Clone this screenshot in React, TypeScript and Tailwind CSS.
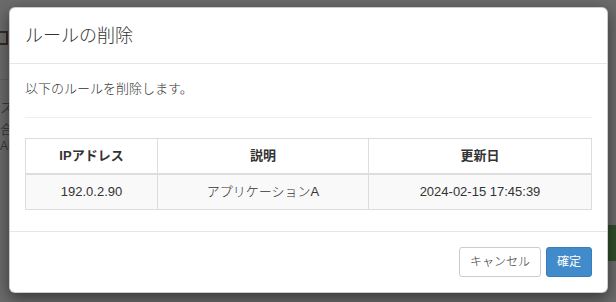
import React from 'react';

const JP = '"Liberation Sans", "Noto Sans CJK JP", sans-serif';

const rows = [
  { ip: '192.0.2.90', desc: 'アプリケーションA', updated: '2024-02-15 17:45:39' },
];

function Backdrop() {
  // dimmed page behind the modal; only its left and right edges show
  return (
    <div className="absolute inset-0 flex justify-between overflow-hidden bg-[#6b6b6b]">
      <div className="flex flex-col pt-[31px] text-[13px] leading-[16px] text-[#3a3a3a]">
        <div className="h-[14px] w-[8px] border-y-2 border-r-2 border-[#3a2a20]" />
        <div className="mt-[34px] h-px w-[9px] bg-[#5e5e5e]" />
        <div className="mt-[20px] whitespace-nowrap">スイッチ</div>
        <div className="mt-[6px] whitespace-nowrap">合計</div>
        <div className="whitespace-nowrap text-[12px]">Abc</div>
      </div>
      <div className="mt-[225px] h-[36px] w-[12px] bg-[#2f4f2a]" />
    </div>
  );
}

export default function App() {
  return (
    <div className="relative h-[302px] w-[616px] overflow-hidden" style={{ fontFamily: JP }}>
      <Backdrop />
      <div className="absolute left-[9px] top-[7px] w-[599px] rounded-md border border-black/20 bg-white text-[#333] shadow-[0_5px_15px_rgba(0,0,0,0.5)]">
        <div className="border-b border-[#e5e5e5] px-[15px] pb-[14px] pt-[15px]">
          <h4 className="text-[18px] font-light leading-[26px]">ルールの削除</h4>
        </div>
        <div className="p-[15px] pb-0">
          <p className="text-[13px] font-light leading-[20px]">以下のルールを削除します。</p>
          <hr className="mb-[20px] mt-[18px] border-t border-[#eee]" />
          <table className="mb-[21px] w-full border-collapse border border-[#ddd] text-[13px] leading-[20px]">
            <thead>
              <tr>
                <th className="w-[132px] border border-b-2 border-[#ddd] px-2 py-[7px] text-center font-bold">IPアドレス</th>
                <th className="w-[211px] border border-b-2 border-[#ddd] px-2 py-[7px] text-center font-bold">説明</th>
                <th className="border border-b-2 border-[#ddd] px-2 py-[7px] text-center font-bold">更新日</th>
              </tr>
            </thead>
            <tbody>
              {rows.map((r) => (
                <tr key={r.ip} className="bg-[#f9f9f9] font-light">
                  <td className="border border-[#ddd] px-2 py-[7px] text-center">{r.ip}</td>
                  <td className="border border-[#ddd] px-2 py-[7px] text-center">{r.desc}</td>
                  <td className="border border-[#ddd] px-2 py-[7px] text-center">{r.updated}</td>
                </tr>
              ))}
            </tbody>
          </table>
        </div>
        <div className="flex justify-end gap-[5px] border-t border-[#e5e5e5] p-[15px]">
          <button className="h-[30px] rounded-[3px] border border-[#ccc] bg-white px-[10px] text-[12px] font-light leading-[18px] text-[#333]">
            キャンセル
          </button>
          <button className="h-[30px] rounded-[3px] border border-[#357ebd] bg-[#428bca] px-[10px] text-[12px] leading-[18px] text-white">
            確定
          </button>
        </div>
      </div>
    </div>
  );
}
